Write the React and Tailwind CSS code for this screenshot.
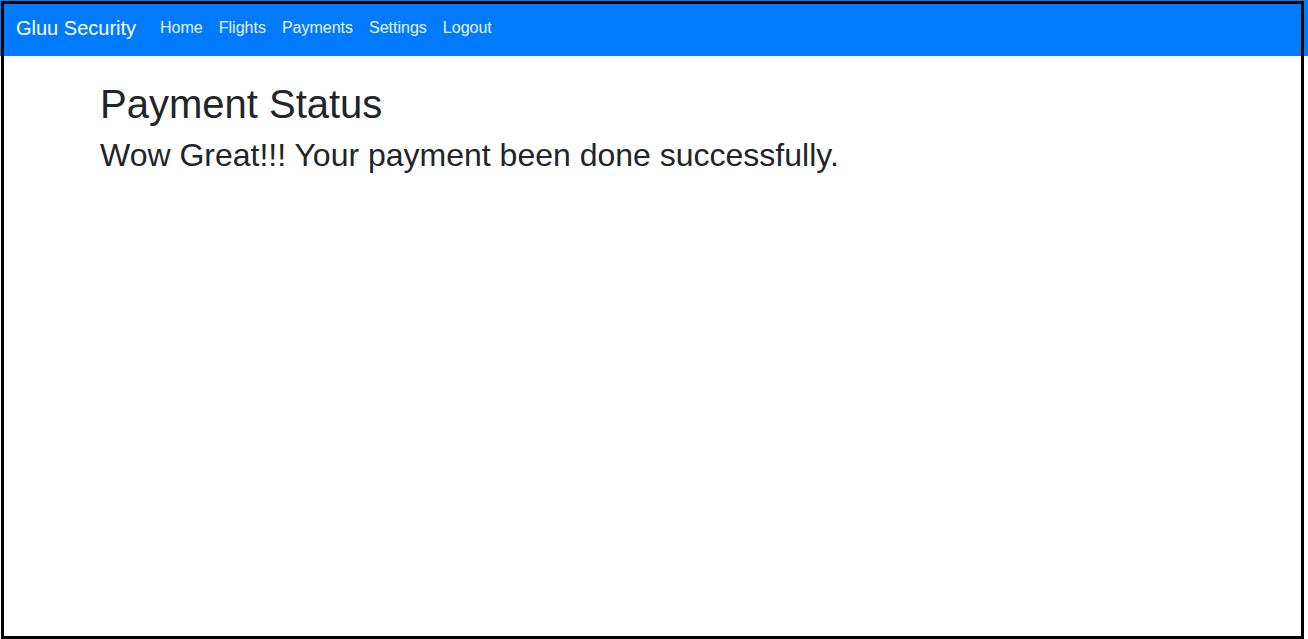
export default function App() {
  const links = ["Home", "Flights", "Payments", "Settings", "Logout"];
  return (
    <div className="relative w-[1308px] h-[639px] bg-white overflow-hidden" style={{ fontFamily: '"Liberation Sans", Arial, sans-serif' }}>
      <nav className="h-[56px] bg-[#007bff] flex items-center px-4">
        <span className="text-white text-[20px] leading-[30px] mr-4">Gluu Security</span>
        <ul className="flex items-center">
          {links.map((l) => (
            <li key={l} className="px-2 text-[16px] leading-6 text-white/90">{l}</li>
          ))}
        </ul>
      </nav>
      <main className="w-[1140px] mx-auto pl-[16px] pr-[15px] pt-[24px] text-[#212529]">
        <h1 className="text-[40px] leading-[1.2] mb-2">Payment Status</h1>
        <h2 className="text-[32px] leading-[1.2]">Wow Great!!! Your payment been done successfully.</h2>
      </main>
      <div className="pointer-events-none absolute left-[1px] top-[1px] w-[1303px] h-[638px] border-[3px] border-black"></div>
    </div>
  );
}
